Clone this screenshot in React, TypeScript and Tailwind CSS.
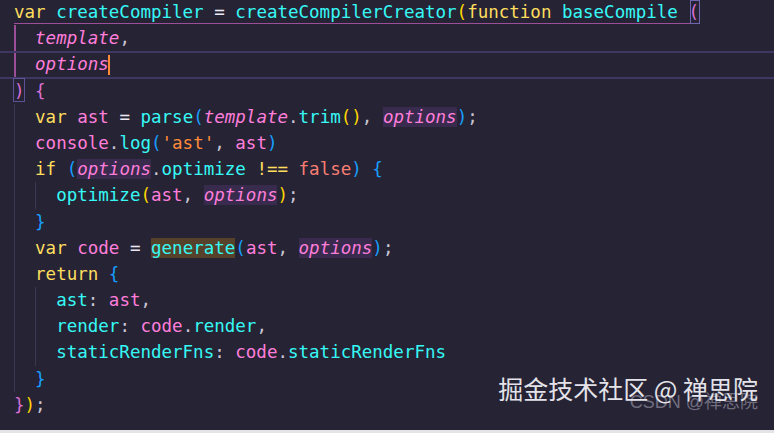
import React from "react";

type Tok = [string, string?];

const K = "text-[#fede5d]";
const F = "text-[#36f9f6]";
const V = "text-[#ff7edb]";
const I = "text-[#ff7edb] italic";
const O = "text-[#ece9f4]";
const P = "text-[#c9c6d4]";
const S = "text-[#ff8b39]";
const B = "text-[#f97e72]";
const G = "text-[#ffd700]";
const M = "text-[#da70d6]";
const L = "text-[#179fff]";
const HI = "text-[#ff7edb] italic bg-[#382b4d]";
const GEN = "text-[#36f9f6] bg-[#56412a]";

// each line: indent guides (char columns), tokens
const lines: { guides: number[]; toks: Tok[] }[] = [
  {
    guides: [],
    toks: [
      ["var", K], [" "], ["createCompiler", F], [" "], ["=", O], [" "],
      ["createCompilerCreator", F], ["(", G], ["function", K], [" "],
      ["baseCompile", F], [" "], ["(", M],
    ],
  },
  { guides: [], toks: [["  "], ["template", I], [",", P]] },
  { guides: [], toks: [["  "], ["options", I]] },
  { guides: [], toks: [[")", M], [" "], ["{", M]] },
  {
    guides: [0],
    toks: [
      ["  "], ["var", K], [" "], ["ast", V], [" "], ["=", O], [" "], ["parse", F], ["(", L],
      ["template", I], [".", P], ["trim", F], ["()", G], [",", P], [" "], ["options", HI], [")", L], [";", P],
    ],
  },
  {
    guides: [0],
    toks: [["  "], ["console", V], [".", P], ["log", F], ["(", L], ["'ast'", S], [",", P], [" "], ["ast", V], [")", L]],
  },
  {
    guides: [0],
    toks: [
      ["  "], ["if", K], [" "], ["(", L], ["options", HI], [".", P], ["optimize", F], [" "],
      ["!==", K], [" "], ["false", B], [")", L], [" "], ["{", L],
    ],
  },
  {
    guides: [0, 2],
    toks: [["    "], ["optimize", F], ["(", G], ["ast", V], [",", P], [" "], ["options", HI], [")", G], [";", P]],
  },
  { guides: [0], toks: [["  "], ["}", L]] },
  {
    guides: [0],
    toks: [
      ["  "], ["var", K], [" "], ["code", V], [" "], ["=", O], [" "], ["generate", GEN], ["(", L],
      ["ast", V], [",", P], [" "], ["options", HI], [")", L], [";", P],
    ],
  },
  { guides: [0], toks: [["  "], ["return", K], [" "], ["{", L]] },
  { guides: [0, 2], toks: [["    "], ["ast", F], [":", P], [" "], ["ast", V], [",", P]] },
  {
    guides: [0, 2],
    toks: [["    "], ["render", F], [":", P], [" "], ["code", V], [".", P], ["render", F], [",", P]],
  },
  {
    guides: [0, 2],
    toks: [["    "], ["staticRenderFns", F], [":", P], [" "], ["code", V], [".", P], ["staticRenderFns", F]],
  },
  { guides: [0], toks: [["  "], ["}", L]] },
  { guides: [], toks: [["}", M], [")", G], [";", P]] },
];

export default function App() {
  return (
    <div className="w-[774px] h-[433px] bg-[#262335] flex flex-col overflow-hidden">
      <div className="relative flex-1 overflow-hidden">
        <div
          className="-mt-[1px] pl-[14px] text-[17.5px] leading-[26.2px] whitespace-pre text-[#ece9f4]"
          style={{ fontFamily: '"DejaVu Sans Mono", monospace' }}
        >
          {lines.map((ln, i) => (
            <div key={i} className="relative h-[26.2px]">
              {ln.guides.map((g) => (
                <div
                  key={g}
                  className={`absolute top-0 bottom-0 w-[1px] bg-[#3c3852] ${g === 0 ? "left-0" : "left-[21px]"}`}
                />
              ))}
              {i === 0 && (
                <>
                  <div className="absolute left-0 w-[676px] top-[24px] h-[1px] bg-[#9a4f98]" />
                  <div className="absolute left-[676px] top-[1px] w-[10px] h-[24px] border border-[#6e64b0]" />
                </>
              )}
              {(i === 1 || i === 2) && (
                <div className="absolute left-0 top-0 bottom-0 w-[2px] bg-[#9a4f98]" />
              )}
              {i === 2 && (
                <>
                  <div className="absolute -left-[14px] right-0 top-[0px] h-[2px] bg-[#3e3663]" />
                  <div className="absolute -left-[14px] right-0 bottom-[-1px] h-[2px] bg-[#3e3663]" />
                  <div className="absolute left-[94px] top-[4px] w-[2px] h-[20px] bg-[#ff8b39]" />
                </>
              )}
              {i === 3 && (
                <div className="absolute -left-[1px] top-[0px] w-[12px] h-[24px] border border-[#5a5496]" />
              )}
              <span className="relative">
                {ln.toks.map(([t, c], j) => (
                  <span key={j} className={c}>
                    {t}
                  </span>
                ))}
              </span>
            </div>
          ))}
        </div>
        <div className="absolute right-[16px] bottom-[14px] w-[262px] h-[44px]">
          <div
            className="absolute right-0 top-[18px] text-[18px] leading-[24px] text-[#8f8d9c] opacity-70 whitespace-nowrap"
            style={{ fontFamily: '"Liberation Sans", "Noto Sans CJK SC", sans-serif' }}
          >
            CSDN @禅思院
          </div>
          <div
            className="absolute right-0 top-0 text-[25px] leading-[32px] text-[#e4e3ea] whitespace-nowrap"
            style={{ fontFamily: '"Noto Sans CJK SC", sans-serif' }}
          >
            掘金技术社区 @ 禅思院
          </div>
        </div>
      </div>
      <div className="h-[3px] bg-[#e4e4e6]" />
    </div>
  );
}
